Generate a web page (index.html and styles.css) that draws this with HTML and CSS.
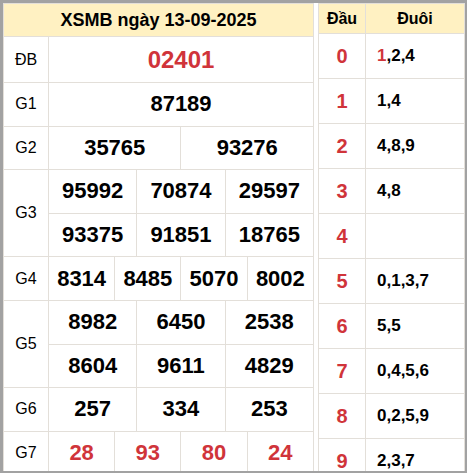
FILE: index.html
```
<!DOCTYPE html>
<html>
<head>
<meta charset="utf-8">
<link rel="stylesheet" href="styles.css">
</head>
<body>
<div class="frame">
  <div class="wrap">
    <table class="kq">
      <colgroup>
        <col class="c-label">
        <col><col><col><col><col><col><col><col><col><col><col><col>
      </colgroup>
      <tr class="r-head"><th colspan="13">XSMB ngày 13-09-2025</th></tr>
      <tr class="r-db"><td class="lbl">ĐB</td><td colspan="12" class="num db">02401</td></tr>
      <tr class="r"><td class="lbl">G1</td><td colspan="12" class="num">87189</td></tr>
      <tr class="r"><td class="lbl">G2</td><td colspan="6" class="num">35765</td><td colspan="6" class="num">93276</td></tr>
      <tr class="r"><td class="lbl" rowspan="2">G3</td><td colspan="4" class="num">95992</td><td colspan="4" class="num">70874</td><td colspan="4" class="num">29597</td></tr>
      <tr class="r"><td colspan="4" class="num">93375</td><td colspan="4" class="num">91851</td><td colspan="4" class="num">18765</td></tr>
      <tr class="r"><td class="lbl">G4</td><td colspan="3" class="num">8314</td><td colspan="3" class="num">8485</td><td colspan="3" class="num">5070</td><td colspan="3" class="num">8002</td></tr>
      <tr class="r"><td class="lbl" rowspan="2">G5</td><td colspan="4" class="num">8982</td><td colspan="4" class="num">6450</td><td colspan="4" class="num">2538</td></tr>
      <tr class="r"><td colspan="4" class="num">8604</td><td colspan="4" class="num">9611</td><td colspan="4" class="num">4829</td></tr>
      <tr class="r"><td class="lbl">G6</td><td colspan="4" class="num">257</td><td colspan="4" class="num">334</td><td colspan="4" class="num">253</td></tr>
      <tr class="r"><td class="lbl">G7</td><td colspan="3" class="num red">28</td><td colspan="3" class="num red">93</td><td colspan="3" class="num red">80</td><td colspan="3" class="num red">24</td></tr>
    </table>
    <table class="loto">
      <colgroup><col class="c-dau"><col></colgroup>
      <tr class="l-head"><th>Đầu</th><th>Đuôi</th></tr>
      <tr><td class="dau">0</td><td class="duoi"><span class="red">1</span>,2,4</td></tr>
      <tr><td class="dau">1</td><td class="duoi">1,4</td></tr>
      <tr><td class="dau">2</td><td class="duoi">4,8,9</td></tr>
      <tr><td class="dau">3</td><td class="duoi">4,8</td></tr>
      <tr><td class="dau">4</td><td class="duoi"></td></tr>
      <tr><td class="dau">5</td><td class="duoi">0,1,3,7</td></tr>
      <tr><td class="dau">6</td><td class="duoi">5,5</td></tr>
      <tr><td class="dau">7</td><td class="duoi">0,4,5,6</td></tr>
      <tr><td class="dau">8</td><td class="duoi">0,2,5,9</td></tr>
      <tr><td class="dau">9</td><td class="duoi">2,3,7</td></tr>
    </table>
  </div>
</div>
</body>
</html>
```
FILE: styles.css
```
html, body {
  margin: 0;
  padding: 0;
  background: #ffffff;
}
body {
  font-family: "Liberation Sans", Arial, sans-serif;
  color: #000;
}
.frame {
  width: 467px;
  height: 473px;
  box-sizing: border-box;
  border-style: solid;
  border-color: #a2a2a2;
  border-width: 3px 2px 2px 3px;
  overflow: hidden;
  background: #fff;
}
.wrap {
  display: flex;
  align-items: flex-start;
  gap: 4px;
}
table {
  border-collapse: collapse;
  table-layout: fixed;
}
th, td {
  border: 1px solid #e3dfd9;
  padding: 0;
  text-align: center;
  vertical-align: middle;
}
th {
  background: #fff1c2;
  font-weight: bold;
}
.kq {
  width: 311px;
  flex: none;
}
.c-label { width: 45px; }
.r-head { height: 33px; }
.r-head th { font-size: 18px; }
.r-db { height: 46px; }
.r { height: 43.6px; }
.lbl {
  font-size: 16px;
}
.num {
  font-size: 22px;
  font-weight: bold;
}
.num.db {
  font-size: 24px;
  color: #d0343a;
}
.red { color: #d0343a; }
.loto {
  width: 147px;
  flex: none;
}
.c-dau { width: 47px; }
.l-head { height: 30px; }
.l-head th { font-size: 16px; }
.loto tr:not(.l-head) { height: 45px; }
.dau {
  font-size: 20px;
  font-weight: bold;
  color: #d0343a;
}
.duoi {
  text-align: left;
  padding-left: 11px;
  font-size: 17px;
  font-weight: bold;
}
```
